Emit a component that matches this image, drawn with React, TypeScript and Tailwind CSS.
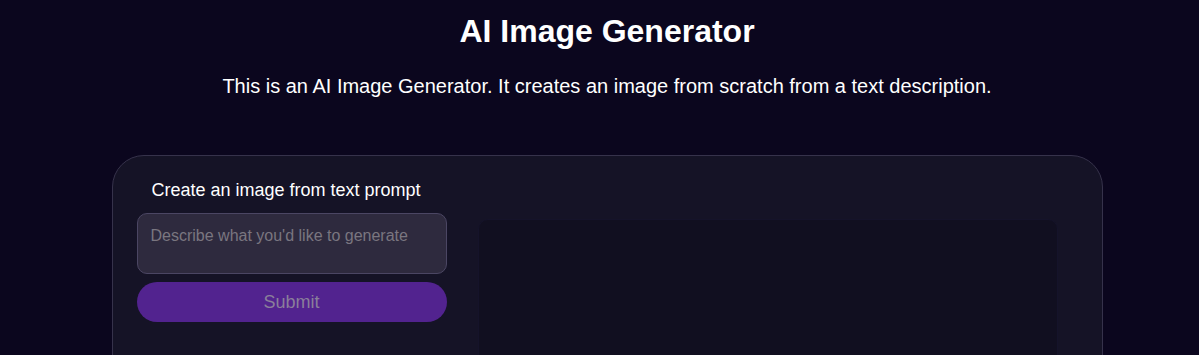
import React from "react";

export default function App() {
  return (
    <div
      className="min-h-screen w-full bg-[#0b061e] text-white pl-[15px] overflow-hidden"
      style={{ fontFamily: '"Liberation Sans", Arial, sans-serif' }}
    >
      <div className="flex flex-col items-center">
        <h1 className="mt-[12px] text-[32px] leading-[38px] font-bold">AI Image Generator</h1>
        <p className="mt-[24px] text-[20px] leading-[24px] text-white">
          This is an AI Image Generator. It creates an image from scratch from a text description.
        </p>
        <div className="mt-[57px] w-[991px] rounded-[32px] border border-[#36324b] bg-[#151326] pl-[24px] pr-[44px] pt-[22px] pb-[40px] flex gap-[31px]">
          <div className="w-[310px] flex flex-col">
            <div className="pl-[15px] text-[18px] leading-[24px] font-medium text-white">
              Create an image from text prompt
            </div>
            <textarea
              placeholder="Describe what you'd like to generate"
              className="mt-[11px] h-[61px] w-full resize-none rounded-[10px] border border-[#4b4663] bg-[#2e2a3e] px-[13px] pt-[12px] pb-[8px] text-[16px] leading-[20px] text-white placeholder:text-[#7a7680] outline-none"
              style={{ fontFamily: '"Liberation Sans", Arial, sans-serif' }}
            />
            <button
              className="mt-[8px] h-[40px] w-full rounded-full bg-[#52238f] text-[18px] font-medium text-[#8a7f9a]"
              style={{ fontFamily: '"Liberation Sans", Arial, sans-serif' }}
            >
              Submit
            </button>
          </div>
          <div className="mt-[41px] h-[400px] flex-1 rounded-[10px] border border-[#15132a] bg-[#110f20]" />
        </div>
      </div>
    </div>
  );
}
